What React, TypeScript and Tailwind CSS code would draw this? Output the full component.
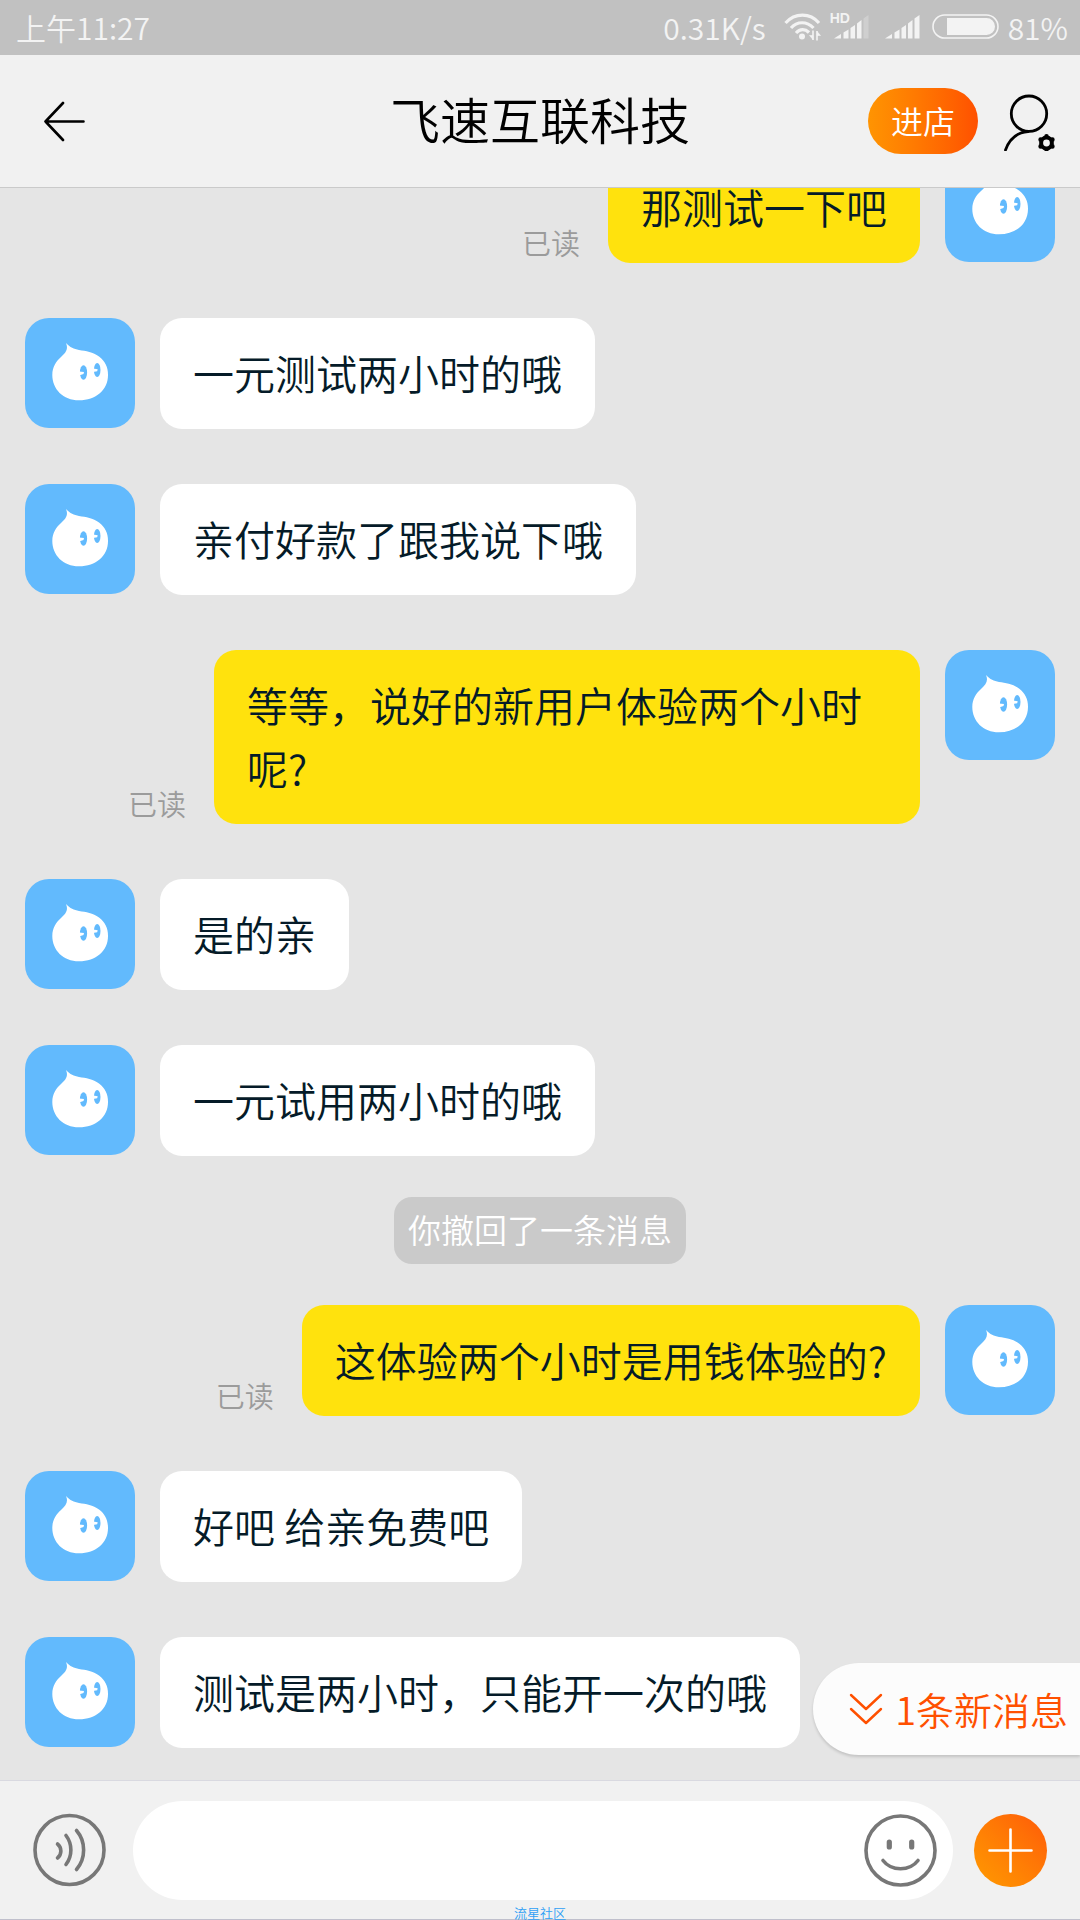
import { useState } from "react";

type Message = {
  id: number;
  kind: "in" | "out" | "notice";
  text: string;
};

const messages: Message[] = [
  { id: 1, kind: "out", text: "那测试一下吧" },
  { id: 2, kind: "in", text: "一元测试两小时的哦" },
  { id: 3, kind: "in", text: "亲付好款了跟我说下哦" },
  { id: 4, kind: "out", text: "等等，说好的新用户体验两个小时呢?" },
  { id: 5, kind: "in", text: "是的亲" },
  { id: 6, kind: "in", text: "一元试用两小时的哦" },
  { id: 7, kind: "notice", text: "你撤回了一条消息" },
  { id: 8, kind: "out", text: "这体验两个小时是用钱体验的?" },
  { id: 9, kind: "in", text: "好吧 给亲免费吧" },
  { id: 10, kind: "in", text: "测试是两小时，只能开一次的哦" },
];

function WifiIcon() {
  return (
    <svg width="38" height="28" viewBox="0 0 38 28" fill="none" stroke="#f3f3f3" strokeWidth="3.2">
      <path d="M1.500 10C11 -0.500 26 -0.500 35 10" />
      <path d="M7 15C13 8 23 8 29.500 15" />
      <path d="M12 20C16 15.500 21 15.500 25 19.500" />
      <circle cx="18" cy="23.500" r="3" fill="#f3f3f3" stroke="none" />
      <path d="M29 27V17.500M33 18V27.500" strokeWidth="1.6" />
      <path d="M25.500 22.500L29 26.500V22.500ZM33 18.500V22.500H36.500Z" fill="#f3f3f3" strokeWidth="0.6" />
    </svg>
  );
}

function SignalIcon({ weak }: { weak?: boolean }) {
  return (
    <svg width="35" height="24" viewBox="0 0 35 24" fill="#f3f3f3">
      <path d="M0 23.5L7 19V23.5Z" />
      <path d="M9.5 17.5L14.5 14.5V23.5H9.5Z" />
      <path d="M16.5 13L21 10V23.5H16.5Z" />
      <path d="M23 8.5L27.5 5V23.5H23Z" />
      <path d="M29.5 3.5L34.5 0V23.5H29.5Z" opacity={weak ? 0.3 : 1} />
    </svg>
  );
}

function BatteryIcon() {
  return (
    <svg width="68" height="26" viewBox="0 0 68 26" fill="none">
      <rect x="1" y="1" width="65" height="23" rx="11.5" stroke="#f3f3f3" strokeWidth="1.6" />
      <path d="M15 4H54.5A8.5 8.5 0 0 1 54.5 21H15Z" fill="#f3f3f3" />
    </svg>
  );
}

function StatusBar() {
  return (
    <div className="flex h-[55px] shrink-0 items-center justify-between bg-[#c1c1c1] pr-3 pb-[2px] pl-4 text-[30px] leading-[40px] text-[#f3f3f3]">
      <span>上午11:27</span>
      <div className="flex items-center">
        <span className="mr-[18px]">0.31K/s</span>
        <WifiIcon />
        <div className="relative ml-3">
          <span className="absolute -top-1 -left-1 font-['Liberation_Sans',sans-serif] text-[14px] leading-[14px] font-bold">
            HD
          </span>
          <SignalIcon weak />
        </div>
        <div className="mr-3 ml-4">
          <SignalIcon />
        </div>
        <BatteryIcon />
        <span className="ml-2">81%</span>
      </div>
    </div>
  );
}

function Header() {
  return (
    <header className="flex h-[133px] shrink-0 items-center border-b border-[#cacaca] bg-[#f1f1f1] px-6">
      <div className="flex flex-1">
        <button aria-label="返回" className="ml-5">
          <svg width="42" height="42" viewBox="0 0 42 42" fill="none" stroke="#000" strokeWidth="2.6" strokeLinecap="round" strokeLinejoin="round">
            <path d="M19 3L1.5 21.5L19 40M1.5 21.5H39.5" />
          </svg>
        </button>
      </div>
      <h1 className="pb-[6px] text-[50px] leading-[64px] text-black">飞速互联科技</h1>
      <div className="flex flex-1 items-center justify-end gap-6">
        <button className="h-[66px] w-[110px] rounded-full bg-linear-to-r from-[#ff9402] to-[#ff5000] pb-[2px] text-[32px] leading-[40px] text-white">
          进店
        </button>
        <button aria-label="联系人设置">
          <svg width="54" height="60" viewBox="-1 -1 54 60" fill="none" stroke="#000">
            <circle cx="26" cy="21.700" r="17.7" strokeWidth="2.8" />
            <path d="M2.5 58C6 48 13 40.5 25 39.700" strokeWidth="2.8" strokeLinecap="round" />
            <circle cx="43.5" cy="51" r="5.4" strokeWidth="4" />
            <g strokeWidth="4.5" strokeLinecap="round">
              <path d="M43.5 44.2V44.3M43.5 57.2V57.3M37.6 47.6V47.7M49.4 47.6V47.7M37.6 54.3V54.4M49.4 54.3V54.4" />
            </g>
          </svg>
        </button>
      </div>
    </header>
  );
}

function Avatar() {
  return (
    <svg className="shrink-0 rounded-[24px] bg-[#62bafd]" width="110" height="110" viewBox="0 0 110 110">
      <path
        d="M41 25C45 29.5 49 31 54 32C61 33 68 34 74 38.5C80 43 83 49 83 57C83 72 71 82.3 54 82.3C38 82.3 27.3 71 27.3 57C27.3 49 31 43.5 36 39C41 34.5 43.5 31 41 25Z"
        fill="#fff"
      />
      <g fill="#62bafd">
        <ellipse cx="58.5" cy="54.5" rx="3.6" ry="7.3" />
        <ellipse cx="72.2" cy="52" rx="3.3" ry="7" />
      </g>
      <path d="M54 53.5L59 54L58.5 56L54 57.5ZM68 50.5L72.7 51.2L72.2 53.2L68 54Z" fill="#fff" />
    </svg>
  );
}

function MessageRow({ message }: { message: Message }) {
  if (message.kind === "notice") {
    return (
      <p className="-my-[14px] self-center rounded-[18px] bg-[#cacaca] px-[14px] pt-3 pb-[14px] text-[33px] leading-[41px] text-white">
        {message.text}
      </p>
    );
  }

  if (message.kind === "in") {
    return (
      <div className="flex items-start gap-[25px]">
        <Avatar />
        <p className="max-w-[706px] rounded-[22px] bg-white px-[33px] pt-[23px] pb-[25px] text-[41px] leading-[63px] text-[#051b28]">
          {message.text}
        </p>
      </div>
    );
  }

  return (
    <div className="flex items-start justify-end gap-[25px]">
      <div className="flex items-end gap-7">
        <span className="mb-[5px] text-[29px] leading-[32px] text-[#9b9b9b]">已读</span>
        <p className="max-w-[706px] rounded-[22px] bg-[#ffe20d] px-[33px] pt-[23px] pb-[25px] text-[41px] leading-[63px] text-[#051b28]">
          {message.text}
        </p>
      </div>
      <Avatar />
    </div>
  );
}

function Composer() {
  const [draft, setDraft] = useState("");

  return (
    <footer className="relative flex h-[140px] shrink-0 items-center border-t border-b border-t-[#d9d9e0] border-b-[#c0c0cc] bg-[#f1f1f1] pr-[33px] pl-8">
      <button aria-label="语音">
        <svg width="74" height="74" viewBox="0 0 74 74" fill="none" stroke="#777" strokeWidth="3.6" strokeLinecap="round">
          <circle cx="37.5" cy="37" r="34.5" />
          <path d="M25.5 31C30 34.5 30 41.5 25.5 45M34 22.5C40.5 31 40.5 43 34 51.5M44.5 17.5C54 28.5 54 45.5 44.5 56.5" />
        </svg>
      </button>
      <div className="ml-[27px] flex h-[99px] flex-1 items-center rounded-full bg-white pr-4 pl-10">
        <input
          aria-label="消息"
          className="min-w-0 flex-1 text-[41px] leading-[63px] text-[#051b28] outline-none"
          value={draft}
          onChange={(e) => setDraft(e.target.value)}
        />
        <button aria-label="表情">
          <svg width="74" height="74" viewBox="0 0 74 74" fill="none" stroke="#777" strokeLinecap="round">
            <circle cx="37.5" cy="37.5" r="34.5" strokeWidth="3.6" />
            <path d="M26.3 29V34M48.7 29V34" strokeWidth="5.2" />
            <path d="M20 47.5C28.5 58.5 46.5 58.5 55 47.5" strokeWidth="3.6" />
          </svg>
        </button>
      </div>
      <button
        aria-label="更多"
        className="ml-[21px] flex size-[73px] items-center justify-center rounded-full bg-linear-to-tr from-[#ff9a00] to-[#ff5a08]"
      >
        <svg width="45" height="45" viewBox="0 0 45 45" stroke="#fff" strokeWidth="2.6" strokeLinecap="round">
          <path d="M22.5 1.5V43.5M1.5 22.5H43.5" />
        </svg>
      </button>
      <span className="absolute bottom-0 left-1/2 -translate-x-1/2 text-[13px] leading-[13px] text-[#2fa0f5]">
        流星社区
      </span>
    </footer>
  );
}

export default function App() {
  return (
    <div className="flex h-screen flex-col overflow-hidden bg-[#e5e5e5] font-['Noto_Sans_CJK_SC',sans-serif] font-[350]">
      <StatusBar />
      <Header />

      <div className="relative flex min-h-0 flex-1 flex-col">
        {/* reversed so the list stays pinned to the newest message */}
        <main className="flex min-h-0 flex-1 flex-col-reverse overflow-y-auto [scrollbar-width:none]">
          <div className="flex flex-col gap-[55px] px-[25px] pb-8">
            {messages.map((message) => (
              <MessageRow key={message.id} message={message} />
            ))}
          </div>
        </main>

        <button className="absolute right-0 bottom-[25px] flex h-[92px] items-center gap-3 rounded-l-full bg-[#fcfcfc] pr-3 pl-9 text-[38px] leading-[56px] text-[#ff5000] shadow-[0_2px_3px_rgba(0,0,0,0.15)]">
          <svg width="34" height="32" viewBox="0 0 34 32" fill="none" stroke="#ff5000" strokeWidth="2.4" strokeLinecap="round" strokeLinejoin="round">
            <path d="M2 2L17 16L32 2M2 16L17 30L32 16" />
          </svg>
          1条新消息
        </button>
      </div>

      <Composer />
    </div>
  );
}
